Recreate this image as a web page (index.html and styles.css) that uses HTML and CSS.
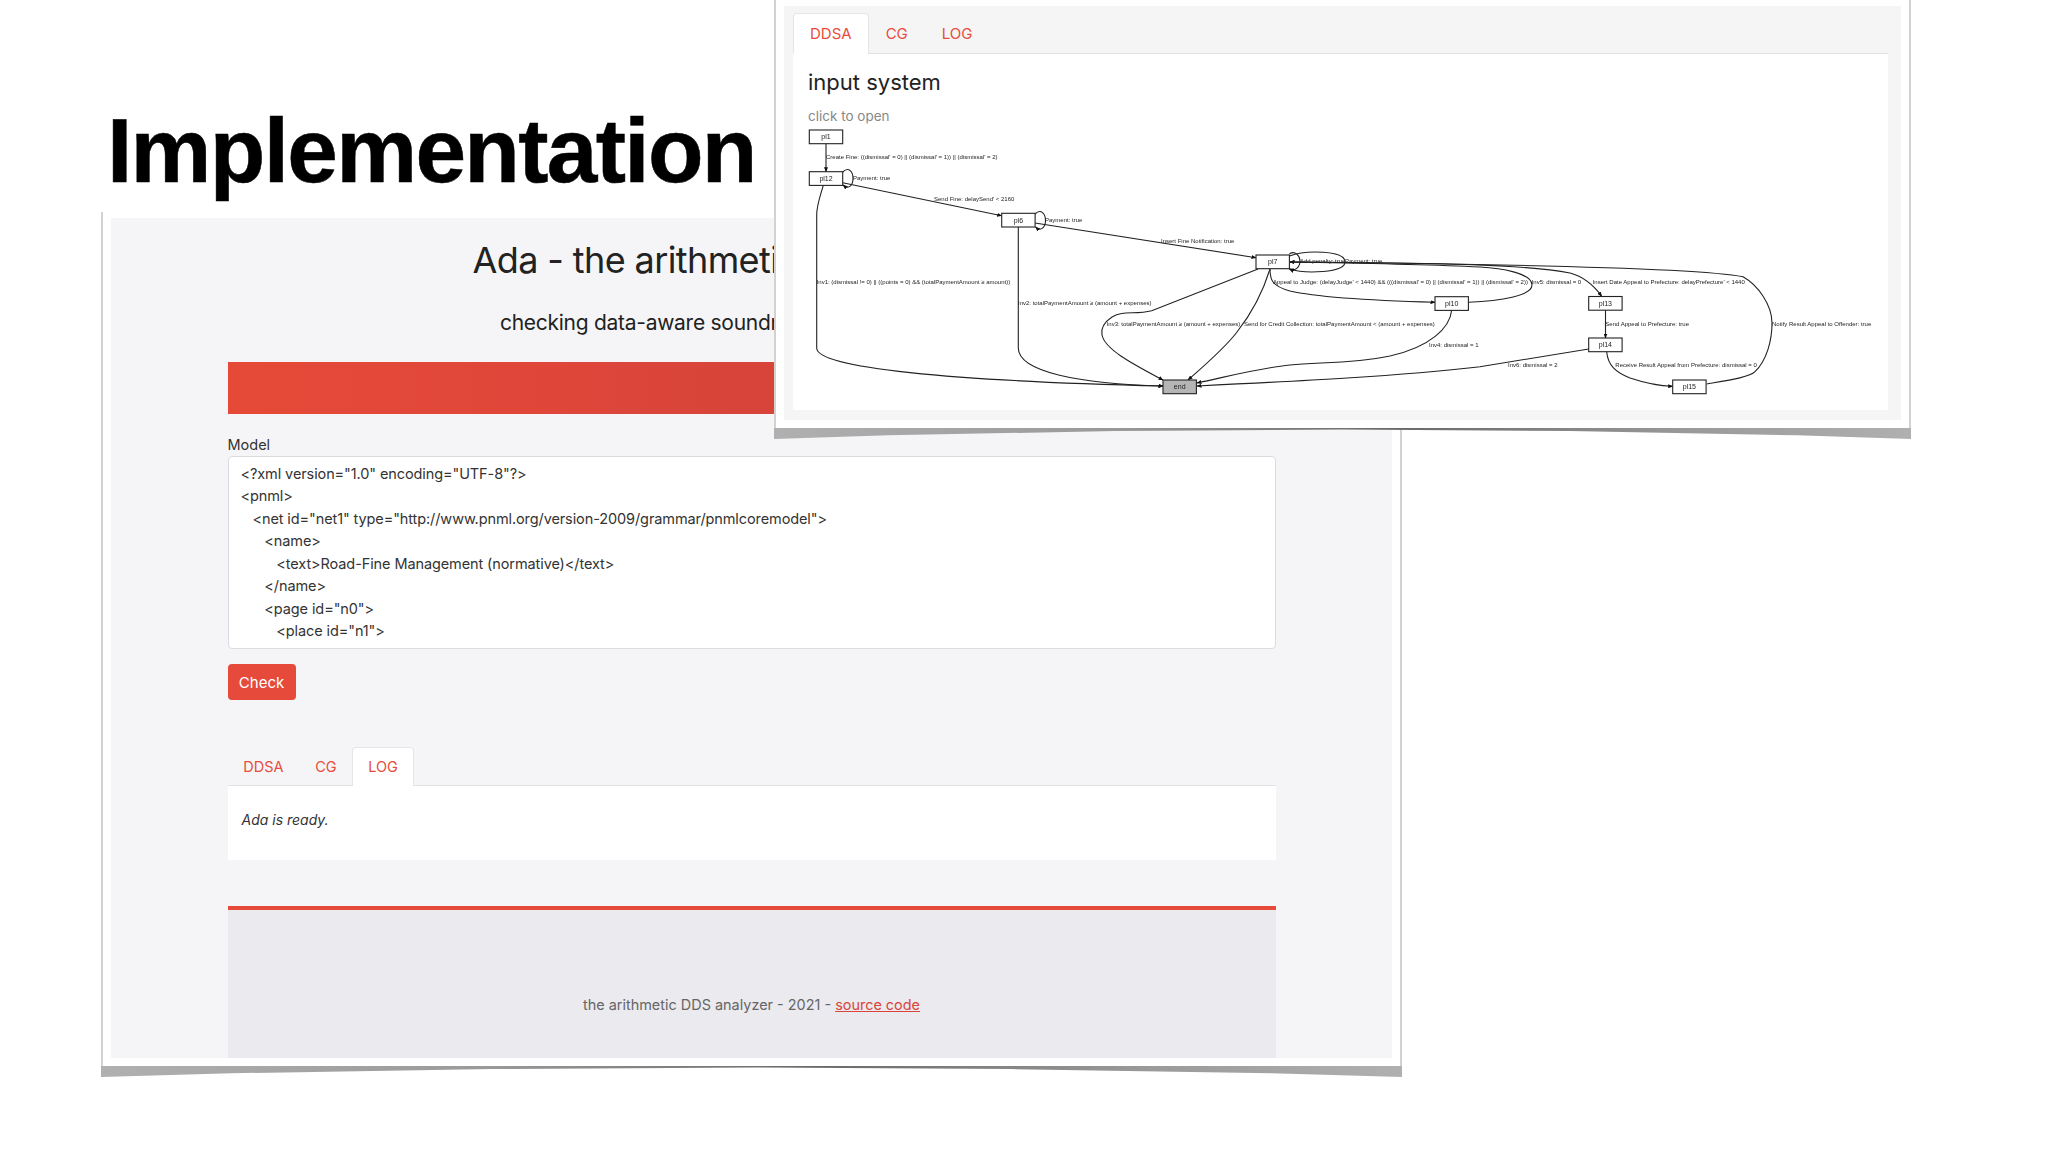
FILE: index.html
```html
<!DOCTYPE html>
<html lang="en">
<head>
<meta charset="utf-8">
<title>Implementation</title>
<link rel="stylesheet" href="styles.css">
</head>
<body>
<main class="slide">
  <h1 class="slide-title">Implementation</h1>

  <section class="shot shot-main">
    <div class="shot-inner">
      <div class="container">
        <h2 class="app-title">Ada - the arithmetic DDS analyzer</h2>
        <p class="app-sub">checking data-aware soundness of arithmetic DDSs</p>
        <div class="banner"></div>
        <div class="field-label">Model</div>
        <div class="model-box">&lt;?xml version="1.0" encoding="UTF-8"?&gt;
&lt;pnml&gt;
   &lt;net id="net1" type="http://www.pnml.org/version-2009/grammar/pnmlcoremodel"&gt;
      &lt;name&gt;
         &lt;text&gt;Road-Fine Management (normative)&lt;/text&gt;
      &lt;/name&gt;
      &lt;page id="n0"&gt;
         &lt;place id="n1"&gt;</div>
        <button class="check-btn" type="button">Check</button>
        <nav class="tabs tabs-main">
          <a class="tab">DDSA</a>
          <a class="tab">CG</a>
          <a class="tab tab-active">LOG</a>
        </nav>
        <div class="log-panel"><em>Ada is ready.</em></div>
        <footer class="app-footer">
          <span>the arithmetic DDS analyzer - 2021 - <a class="source-link">source code</a></span>
        </footer>
      </div>
    </div>
  </section>

  <section class="shot shot-float">
    <div class="shot-inner float-inner">
      <nav class="tabs tabs-float">
        <a class="tab tab-active">DDSA</a>
        <a class="tab">CG</a>
        <a class="tab">LOG</a>
      </nav>
      <div class="graph-panel">
        <h3 class="graph-title">input system</h3>
        <p class="graph-hint">click to open</p>
        <svg class="graph" viewBox="793 125 1095 285" role="img" aria-label="input system graph">
          <defs>
            <marker id="arrow" markerWidth="5" markerHeight="4" refX="4.5" refY="2" orient="auto" markerUnits="userSpaceOnUse">
              <path class="arrowhead" d="M0 0 L5 2 L0 4 Z"/>
            </marker>
          </defs>
          <g class="edges">
            <path marker-end="url(#arrow)" d="M826 143.7 L826 171.7"/>
            <path marker-end="url(#arrow)" d="M842.7 172 C849 166 853 172 853 178.5 C853 185 849 190 843 185"/>
            <path marker-end="url(#arrow)" d="M842.7 182.7 L1001.7 215.7"/>
            <path marker-end="url(#arrow)" d="M823.3 185.3 C820 197 816.7 205 816.7 215 L816.7 348 C816.7 368 950 381 1163 386"/>
            <path marker-end="url(#arrow)" d="M1035 214 C1041 208 1045.5 214 1045.5 220.5 C1045.5 227 1041 232 1035.5 227"/>
            <path marker-end="url(#arrow)" d="M1035 223 L1256 257.7"/>
            <path marker-end="url(#arrow)" d="M1018.3 227 L1018.3 348 C1018.3 372 1080 384 1163 386"/>
            <path marker-end="url(#arrow)" d="M1258 269 L1151.7 310.7 C1135 315 1123 310 1112 317 C1103 323 1101 330 1102 335 C1105 350 1135 365 1163 380"/>
            <path marker-end="url(#arrow)" d="M1270 269 C1262 295 1248 318 1237 332 C1225 348 1205 365 1188 380"/>
            <path marker-end="url(#arrow)" d="M1270 269 C1270 280 1272 286 1290 291 C1320 298 1390 301 1435 302.3"/>
            <path marker-end="url(#arrow)" d="M1289.5 254 C1295 250 1300 256 1300 261 C1300 267 1295 272 1289.5 269"/>
            <path marker-end="url(#arrow)" d="M1289.5 256 C1305 250 1345 250 1345 262 C1345 273 1305 274 1289.5 269"/>
            <path marker-end="url(#arrow)" d="M1706.7 384 C1730 380 1750 377 1755 371.7 C1767 360 1772 340 1772 323 C1772 305 1758 285 1743 276.7 C1700 268 1500 264 1290 262"/>
            <path marker-end="url(#arrow)" d="M1468.7 302.3 C1500 301 1532 296 1532 285 C1532 273 1500 268 1480 267 C1420 264 1350 263 1290 262"/>
            <path marker-end="url(#arrow)" d="M1290 262 C1400 263 1520 263 1570 273 C1585 277 1595 287 1601.7 296.3"/>
            <path marker-end="url(#arrow)" d="M1605.5 310 L1605.5 338"/>
            <path marker-end="url(#arrow)" d="M1588.7 349 L1480 366.7 C1400 376 1300 381 1197 386"/>
            <path marker-end="url(#arrow)" d="M1451.7 310 C1450 328 1430 347 1390 356 C1350 364 1320 362 1290 365 C1260 368 1230 376 1197 383"/>
            <path marker-end="url(#arrow)" d="M1606.7 352 C1608 365 1615 372 1630 378 C1645 383 1660 386 1672.7 386.3"/>
          </g>
          <g class="nodes">
            <rect x="809.3" y="130" width="33.4" height="13.7"/>
            <rect x="809.3" y="171.7" width="33.4" height="13.7"/>
            <rect x="1001.7" y="213.3" width="33.4" height="13.7"/>
            <rect x="1256" y="255" width="33.4" height="13.7"/>
            <rect x="1435" y="296.7" width="33.4" height="13.7"/>
            <rect x="1588.7" y="296.5" width="33.4" height="13.7"/>
            <rect x="1588.7" y="338" width="33.4" height="13.7"/>
            <rect x="1672.7" y="380" width="33.4" height="13.7"/>
            <rect class="node-end" x="1163" y="380" width="33.4" height="13.7"/>
          </g>
          <g class="node-labels">
            <text x="826" y="139.4">pl1</text>
            <text x="826" y="181">pl12</text>
            <text x="1018.4" y="222.7">pl6</text>
            <text x="1272.7" y="264.4">pl7</text>
            <text x="1451.7" y="306">pl10</text>
            <text x="1605.4" y="306">pl13</text>
            <text x="1605.4" y="347.4">pl14</text>
            <text x="1689.4" y="389.4">pl15</text>
            <text x="1179.7" y="389.4">end</text>
          </g>
          <g class="edge-labels">
            <text x="826" y="159.4">Create Fine: ((dismissal' = 0) || (dismissal' = 1)) || (dismissal' = 2)</text>
            <text x="853" y="180.2">Payment: true</text>
            <text x="934" y="201">Send Fine: delaySend' &lt; 2160</text>
            <text x="1045" y="221.8">Payment: true</text>
            <text x="1161" y="242.5">Insert Fine Notification: true</text>
            <text x="1300" y="263.4">Add penalty: true</text>
            <text x="1345" y="263.4">Payment: true</text>
            <text x="816.7" y="284.2">Inv1: (dismissal != 0) || ((points = 0) &amp;&amp; (totalPaymentAmount ≥ amount))</text>
            <text x="1273" y="284.2">Appeal to Judge: (delayJudge' &lt; 1440) &amp;&amp; (((dismissal' = 0) || (dismissal' = 1)) || (dismissal' = 2))</text>
            <text x="1531.7" y="284.2">Inv5: dismissal = 0</text>
            <text x="1592.7" y="284.2">Insert Date Appeal to Prefecture: delayPrefecture' &lt; 1440</text>
            <text x="1018" y="305">Inv2: totalPaymentAmount ≥ (amount + expenses)</text>
            <text x="1106.7" y="326">Inv3: totalPaymentAmount ≥ (amount + expenses)</text>
            <text x="1244" y="326">Send for Credit Collection: totalPaymentAmount &lt; (amount + expenses)</text>
            <text x="1605.3" y="326">Send Appeal to Prefecture: true</text>
            <text x="1772" y="326">Notify Result Appeal to Offender: true</text>
            <text x="1429" y="346.6">Inv4: dismissal = 1</text>
            <text x="1508" y="367.4">Inv6: dismissal = 2</text>
            <text x="1615.3" y="367.4">Receive Result Appeal from Prefecture: dismissal = 0</text>
          </g>
        </svg>
      </div>
    </div>
  </section>
</main>
</body>
</html>
```
FILE: styles.css
```css
* { box-sizing: border-box; }

html, body {
  margin: 0;
  padding: 0;
  background: #fff;
}

body {
  font-family: Inter, "Liberation Sans", sans-serif;
  color: #222;
}

.slide {
  position: relative;
  width: 2048px;
  height: 1152px;
  overflow: hidden;
  padding-top: 96px;
}

.slide-title {
  margin: 0 0 0 107px;
  height: 116px;
  font-family: "Liberation Sans", Arial, sans-serif;
  font-size: 91px;
  line-height: 110px;
  font-weight: 700;
  letter-spacing: -1.7px;
  -webkit-text-stroke: 0.5px #000;
  color: #000;
}

/* Pasted screenshots with the curled shadow */
.shot {
  background: #fff;
  padding: 6px 8px 8px;
  border-left: 2px solid #d2d2d2;
  border-right: 2px solid #d2d2d2;
}

.shot::after {
  content: "";
  position: absolute;
  left: -2px;
  right: -2px;
  top: 100%;
  height: 11px;
  background: linear-gradient(90deg, #b0b0b0, #999 30%, #6a6a6a 55%, #999 80%, #b0b0b0);
  clip-path: polygon(0 0, 100% 0, 100% 100%, 90% 66%, 70% 28%, 50% 14%, 30% 28%, 10% 66%, 0 100%);
  filter: blur(0.5px);
}

.shot-main {
  position: relative;
  margin-left: 101px;
  width: 1301px;
  height: 854px;
}

.shot-float {
  position: absolute;
  left: 774px;
  top: 0;
  width: 1137px;
  height: 428px;
}

.shot-inner {
  height: 100%;
  background: #f5f5f7;
  overflow: hidden;
}

/* Main window */
.container {
  width: 1048px;
  margin: 0 auto;
}

.app-title {
  margin: 0;
  padding-top: 20px;
  font-size: 36px;
  line-height: 44px;
  font-weight: 400;
  letter-spacing: -0.6px;
  text-align: center;
  color: #222;
}

.app-sub {
  margin: 27px 0 0;
  font-size: 21px;
  line-height: 28px;
  font-weight: 400;
  letter-spacing: -0.27px;
  text-align: center;
  color: #222;
}

.banner {
  height: 52px;
  margin-top: 25px;
  background: linear-gradient(90deg, #e54a38, #e14739 25%, #d8443a 50%, #d8443a);
}

.field-label {
  margin-top: 20px;
  height: 22px;
  font-size: 14.5px;
  line-height: 21px;
  color: #333;
}

.model-box {
  height: 193px;
  padding: 5.5px 12px;
  background: #fff;
  border: 1px solid #dcdce0;
  border-radius: 4px;
  font-size: 14.5px;
  line-height: 22.55px;
  letter-spacing: -0.1px;
  color: #333;
  white-space: pre;
  overflow: hidden;
}

.check-btn {
  display: block;
  width: 68px;
  height: 36px;
  margin-top: 15px;
  padding: 0;
  border: 0;
  border-radius: 4px;
  background: #e54a3a;
  color: #fff;
  font: 400 15px Inter, "Liberation Sans", sans-serif;
}

.tabs {
  display: flex;
  border-bottom: 1px solid #e2e2e5;
}

.tab {
  display: block;
  padding: 0 16px;
  color: #e74c3c;
  font-size: 15px;
  line-height: 38px;
  border: 1px solid transparent;
  border-bottom: 0;
  border-radius: 4px 4px 0 0;
}

.tab-active {
  background: #fff;
  border-color: #e6e6e9;
  margin-bottom: -1px;
}

.tabs-main {
  margin-top: 47px;
  height: 39px;
}

.tabs-main .tab {
  padding: 0 14.8px;
  font-size: 14.5px;
}

.log-panel {
  height: 74px;
  padding: 23px 14px;
  background: #fff;
  font-size: 14px;
  line-height: 22px;
  color: #333;
}

.app-footer {
  display: flex;
  justify-content: center;
  align-items: flex-start;
  height: 160px;
  margin-top: 46px;
  padding-top: 84px;
  background: #ebeaee;
  border-top: 4px solid #e54a3a;
  font-size: 14.45px;
  line-height: 22px;
  color: #666;
}

.source-link {
  color: #d9453a;
  text-decoration: underline;
}

/* Floating window */
.float-inner {
  padding: 7px 13px 10px 9px;
  background: #f5f5f6;
}

.tabs-float {
  height: 41px;
}

.tabs-float .tab {
  line-height: 40px;
}

.graph-panel {
  height: 356px;
  padding: 0;
  background: #fff;
}

.graph-title {
  margin: 0;
  padding: 14px 0 0 15px;
  font-size: 22px;
  line-height: 28px;
  font-weight: 400;
  color: #222;
}

.graph-hint {
  margin: 11px 0 0;
  padding-left: 15px;
  height: 18px;
  font-size: 13.5px;
  line-height: 19px;
  color: #888;
}

.graph {
  display: block;
  width: 1095px;
  height: 285px;
  filter: blur(0.3px);
}

.edges path {
  fill: none;
  stroke: #222;
  stroke-width: 1.1;
}

.arrowhead {
  fill: #111;
}

.nodes rect {
  fill: #fff;
  stroke: #222;
  stroke-width: 1.1;
}

.nodes .node-end {
  fill: #b5b5b5;
}

.node-labels text {
  font-family: "Liberation Sans", Arial, sans-serif;
  font-size: 7px;
  fill: #222;
  text-anchor: middle;
}

.edge-labels text {
  font-family: "Liberation Sans", Arial, sans-serif;
  font-size: 6px;
  fill: #222;
}
```
